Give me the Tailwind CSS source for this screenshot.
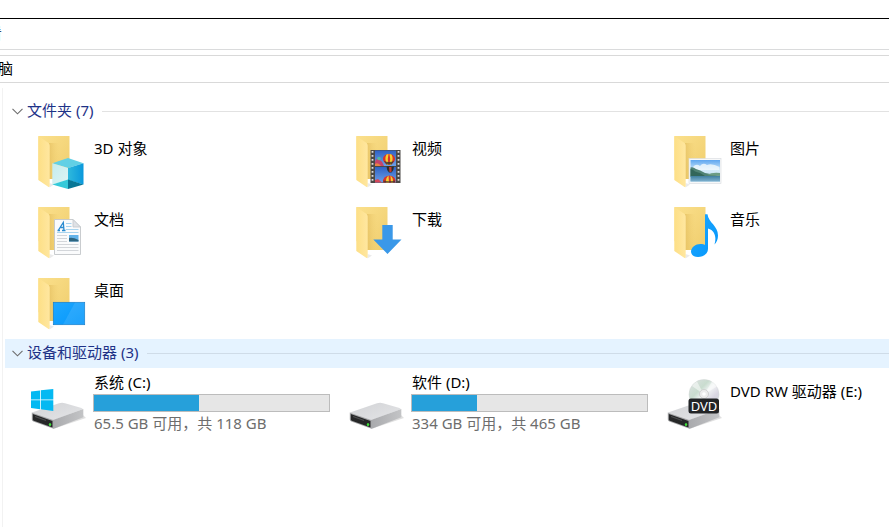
<!DOCTYPE html>
<html lang="zh-CN">
<head>
    <meta charset="UTF-8">
    <meta name="viewport" content="width=device-width, initial-scale=1.0">
    <title>此电脑</title>
    <script src="https://cdn.jsdelivr.net/npm/@tailwindcss/browser@4"></script>
</head>
<body class="min-h-screen flex flex-col overflow-x-hidden bg-white font-['Noto_Sans','Noto_Sans_CJK_SC',sans-serif] text-[15px] leading-5 text-black">
    <!-- Shared gradients and shapes -->
    <svg class="absolute size-0" aria-hidden="true">
        <defs>
            <linearGradient id="back" x1="0" y1="0" x2="1" y2="1">
                <stop offset="0" stop-color="#fbe08c"/><stop offset="1" stop-color="#efcd6d"/>
            </linearGradient>
            <linearGradient id="flap" x1="0" y1="0" x2="1" y2="0">
                <stop offset="0" stop-color="#fddf86"/><stop offset="1" stop-color="#ffe7a0"/>
            </linearGradient>
            <linearGradient id="fold" x1="0" y1="0" x2="1" y2="0">
                <stop offset="0" stop-color="#dfb858" stop-opacity=".6"/><stop offset="1" stop-color="#eecb69" stop-opacity="0"/>
            </linearGradient>
            <linearGradient id="blue" x1="0" y1="0" x2="1" y2="1">
                <stop offset="0" stop-color="#1fa8ff"/><stop offset="1" stop-color="#0496fb"/>
            </linearGradient>
            <linearGradient id="sky" x1="0" y1="0" x2="0" y2="1">
                <stop offset="0" stop-color="#5ea6f0"/><stop offset=".5" stop-color="#d5ecfa"/><stop offset="1" stop-color="#a6d2ea"/>
            </linearGradient>
            <linearGradient id="sea" x1="0" y1="0" x2="0" y2="1">
                <stop offset="0" stop-color="#3f7f9f"/><stop offset="1" stop-color="#7fb2d0"/>
            </linearGradient>
            <linearGradient id="film" x1="0" y1="0" x2="0" y2="1">
                <stop offset="0" stop-color="#2f62c4"/><stop offset="1" stop-color="#6c9fe6"/>
            </linearGradient>
            <linearGradient id="cubeLeft" x1="0" y1="0" x2="1" y2="1">
                <stop offset="0" stop-color="#c4ecef"/><stop offset="1" stop-color="#def4f3"/>
            </linearGradient>
            <linearGradient id="cubeRight" x1="0" y1="0" x2="1" y2="0">
                <stop offset="0" stop-color="#2fb9dc"/><stop offset="1" stop-color="#0a98dc"/>
            </linearGradient>
            <linearGradient id="metalTop" x1="0" y1="0" x2="1" y2="1">
                <stop offset="0" stop-color="#d2d3d6"/><stop offset="1" stop-color="#e4e5e7"/>
            </linearGradient>
            <linearGradient id="metalSide" x1="0" y1="0" x2="1" y2="0">
                <stop offset="0" stop-color="#a9aaad"/><stop offset="1" stop-color="#c3c4c6"/>
            </linearGradient>
            <linearGradient id="disc" x1="0" y1="0" x2="1" y2="1">
                <stop offset="0" stop-color="#dfe3e3"/><stop offset=".35" stop-color="#c9dccf"/><stop offset=".5" stop-color="#f1f4f4"/><stop offset=".7" stop-color="#d9d6e2"/><stop offset="1" stop-color="#cbd6d8"/>
            </linearGradient>
            <symbol id="folder" viewBox="0 0 64 64">
                <path d="M8.500 6H39.500V49H19L8.500 40Z" fill="url(#back)"/>
                <path d="M19 13H29V49H19Z" fill="url(#fold)"/>
                <path d="M19.500 57.500L24 54.500L19.500 53Z" fill="#dcdcdc" opacity=".6"/>
                <path d="M8.300 6L18.500 13Q19.700 14 19.700 15.500V55.500Q19.700 58 17.800 56.500L8.300 50Z" fill="url(#flap)"/>
            </symbol>
            <symbol id="drive" viewBox="0 0 64 64">
                <path d="M23 57L56 46L53 43Z" fill="#999" opacity=".3"/>
                <path d="M2 40.500L29 31.300Q32 30.300 35 31.200L51.500 36Q53.500 36.700 52 37.500L23.500 48Z" fill="url(#metalTop)"/>
                <path d="M23 48L53.300 37V45.300L24.500 56.500L23 56.800Z" fill="url(#metalSide)"/>
                <path d="M1.800 40.500L23.500 48V56.800L3.300 49.500Q1.800 49 1.800 47.500Z" fill="#a6a7a9"/>
                <path d="M2.800 42L22.500 49V55.500L3.800 48.800Q2.800 48.400 2.800 47.400Z" fill="#262728"/>
                <path d="M5 44.500L16 48.500" stroke="#4c4d4e" stroke-width="1.200"/>
                <ellipse cx="20" cy="52.500" rx="1.200" ry="1.500" fill="#3fe03a"/>
            </symbol>
            <symbol id="balloon" viewBox="0 0 12 14">
                <path d="M6 0C9.500 0 12 2.300 12 5C12 8 8.500 10 8 11H4C3.500 10 0 8 0 5C0 2.300 2.500 0 6 0Z" fill="#d8352a"/>
                <path d="M3.500 .6Q1 5 4 11H5.500Q4 5 5.500 0ZM8.500 .6Q11 5 8 11H6.500Q8 5 6.500 0Z" fill="#f6cf2f"/>
                <path d="M1 7Q6 9 11 7L8.500 10.500H3.500Z" fill="#33322f" opacity=".8"/>
                <path d="M4.500 12H7.500V14H4.500Z" fill="#4e3320"/>
            </symbol>
        </defs>
    </svg>

    <!-- Ribbon tabs -->
    <nav class="mt-[18px] h-8 flex items-center border-t border-b border-t-black border-b-[#dadbdc] overflow-hidden">
        <a href="#" class="-ml-7 pb-0.5 text-[#2b4a6b]">查看</a>
    </nav>

    <!-- Address bar -->
    <nav class="mt-[5px] h-7 flex items-center border-y border-[#d9d9d9] overflow-hidden">
        <a href="#" class="-ml-8 pb-0.5">此电脑</a>
    </nav>

    <!-- Content -->
    <main class="grow mt-[5px] ml-0.5 pl-0.5 pt-[9px] border-l border-[#f2f2f2]">
        <section>
            <h2>
                <button type="button" class="w-full h-[29px] pl-[7px] flex items-center text-left text-[#1e3287]">
                    <svg class="w-[11px] h-[7px] mr-1" viewBox="0 0 11 7" fill="none" stroke="#6d6d6d" stroke-width="1.100"><path d="M.5 .8L5.500 5.800L10.500 .8"/></svg>
                    <span class="pb-[3px]">文件夹 (7)</span>
                    <span class="grow ml-[9px] h-px bg-[#e2e2e2]"></span>
                </button>
            </h2>
            <ul class="pl-[25px] grid grid-cols-[318px_318px_1fr]">
                <li>
                    <a href="#" class="flex pt-1 pb-[3px]">
                        <svg class="size-16 shrink-0" viewBox="0 0 64 64">
                            <use href="#folder"/>
                            <path d="M38 28L53.500 33.300L38 38L22.300 33.300Z" fill="#62d0e5"/>
                            <path d="M22.300 33.300L38 38V50L22.300 54.500Z" fill="url(#cubeLeft)"/>
                            <path d="M38 38L53.500 33.300V54.500L38 50Z" fill="url(#cubeRight)"/>
                            <path d="M22.300 54.500L38 49.500V59Z" fill="#35c9d9"/>
                            <path d="M38 49.500L53.500 54.500L38 59Z" fill="#087796"/>
                        </svg>
                        <span class="mt-2">3D 对象</span>
                    </a>
                </li>
                <li>
                    <a href="#" class="flex pt-1 pb-[3px]">
                        <svg class="size-16 shrink-0" viewBox="0 0 64 64">
                            <use href="#folder"/>
                            <rect x="22.500" y="20" width="30" height="33" fill="#4a4846"/>
                            <path d="M24.500 21V53M50.500 21V53" stroke="#ddd" stroke-width="1.800" stroke-dasharray="1.800 2.200"/>
                            <rect x="27" y="20.500" width="21" height="15.500" fill="url(#film)"/>
                            <rect x="27" y="37" width="21" height="15.500" fill="url(#film)"/>
                            <path d="M27 32Q28 27 31 30Q34 30 36 36H27Z" fill="#c5456a"/>
                            <path d="M27 34Q30 32 33 36H27Z" fill="#e78246"/>
                            <path d="M27 52.500V50L30 49L34 52.500Z" fill="#d5485a"/>
                            <circle cx="31" cy="28.500" r="1.800" fill="#54b6a0"/>
                            <use href="#balloon" x="35" y="24" width="12" height="14"/>
                            <path d="M38.500 36.500H46Q46 40 43.500 42.500H41Q38.500 40 38.500 36.500Z" fill="#2c2f2c"/>
                            <path d="M41 37H43.500V42H41.500Z" fill="#c83a2c"/>
                            <path d="M35 52.500Q34.500 46 41.500 45.500Q48 46 47.500 52.500Z" fill="#d8352a"/>
                            <path d="M38 52.500Q37.500 48 40.500 45.500L41 52.500ZM43 52.500L42.500 45.500Q45.500 48 45 52.500Z" fill="#f6cf2f"/>
                            <path d="M35.500 50.500Q41 52 47 50.500V52.500H35.500Z" fill="#33322f" opacity=".7"/>
                        </svg>
                        <span class="mt-2">视频</span>
                    </a>
                </li>
                <li>
                    <a href="#" class="flex pt-1 pb-[3px]">
                        <svg class="size-16 shrink-0" viewBox="0 0 64 64">
                            <use href="#folder"/>
                            <rect x="23" y="28.500" width="32" height="25" fill="#f7f8f9" stroke="#d8dade" stroke-width=".6"/>
                            <rect x="24.500" y="30" width="29.500" height="21.500" fill="url(#sky)"/>
                            <path d="M27 37Q30 33 34 36Q37 32 41 35Q46 33 53.500 37V40H27Z" fill="#f4fafd" opacity=".8"/>
                            <path d="M24.500 37.500Q27 36.500 30 39Q34 40 39 43Q44 44 54 46V47H24.500Z" fill="#4f8274"/>
                            <path d="M24.500 39Q27 39 29 41.500Q35 42.500 39 46H24.500Z" fill="#32665a"/>
                            <path d="M41 45Q46 42 54 43V46Z" fill="#6b9c84"/>
                            <rect x="24.500" y="46" width="29.500" height="5.500" fill="url(#sea)"/>
                        </svg>
                        <span class="mt-2">图片</span>
                    </a>
                </li>
                <li>
                    <a href="#" class="flex pt-1 pb-[3px]">
                        <svg class="size-16 shrink-0" viewBox="0 0 64 64">
                            <use href="#folder"/>
                            <path d="M24.500 18.500H43L50.500 26V53.500H24.500Z" fill="#fafbfc" stroke="#c3c6ca" stroke-width=".9"/>
                            <path d="M43 18.500V26H50.500Z" fill="#dfe2e6" stroke="#c3c6ca" stroke-width=".8"/>
                            <path d="M36 22.500H41.500M36 25.500H41.500M36 28.500H48.500M27 31.500H48.500" stroke="#a8d4ef"/>
                            <path d="M27 34.500H37M27 37.500H37M27 40.500H37M27 43.500H48.500M27 46.500H48.500M27 49.500H48.500" stroke="#d3d6da"/>
                            <path d="M27.500 29.500H30M32 29.500H35.500M28.500 29L33.300 21.500L34 29.500M30.500 26.500H33.500" fill="none" stroke="#2a8bd0" stroke-width="1.300"/>
                            <rect x="39" y="34" width="9.500" height="6.500" fill="#62b3ea"/>
                            <path d="M39 37Q43 36 48.500 39V40.500H39Z" fill="#2d6580"/>
                        </svg>
                        <span class="mt-2">文档</span>
                    </a>
                </li>
                <li>
                    <a href="#" class="flex pt-1 pb-[3px]">
                        <svg class="size-16 shrink-0" viewBox="0 0 64 64">
                            <use href="#folder"/>
                            <path d="M34.300 24H44.700V38.500H53.500L39.500 53L25.300 38.500H34.300Z" fill="#3a98e8"/>
                        </svg>
                        <span class="mt-2">下载</span>
                    </a>
                </li>
                <li>
                    <a href="#" class="flex pt-1 pb-[3px]">
                        <svg class="size-16 shrink-0" viewBox="0 0 64 64">
                            <use href="#folder"/>
                            <path d="M39 13.300H41.500C42.500 22 52 24.500 52 34.500C52 38.500 50.500 41.500 48.500 43.500C50.500 37 49.500 29.500 42 27.500V48C42 53 37 56 32 56C27.500 56 25 53.500 25 50.500C25 46.500 29.500 43 34.500 43C36.500 43 38 43.300 39 44Z" fill="url(#blue)"/>
                        </svg>
                        <span class="mt-2">音乐</span>
                    </a>
                </li>
                <li>
                    <a href="#" class="flex pt-1 pb-[3px]">
                        <svg class="size-16 shrink-0" viewBox="0 0 64 64">
                            <use href="#folder"/>
                            <rect x="23.300" y="30.300" width="31.400" height="22.400" fill="url(#blue)" stroke="#1a7fc9" stroke-width=".7"/>
                            <path d="M45 30.500H54.500V52.500H33Z" fill="#fff" opacity=".1"/>
                        </svg>
                        <span class="mt-2">桌面</span>
                    </a>
                </li>
            </ul>
        </section>

        <section>
            <h2>
                <button type="button" class="w-full h-[29px] pl-[7px] flex items-center text-left text-[#1e3287] bg-[#e5f3ff]">
                    <svg class="w-[11px] h-[7px] mr-1" viewBox="0 0 11 7" fill="none" stroke="#6d6d6d" stroke-width="1.100"><path d="M.5 .8L5.500 5.800L10.500 .8"/></svg>
                    <span class="pb-[3px]">设备和驱动器 (3)</span>
                    <span class="grow ml-[9px] h-px bg-[#cfdce8]"></span>
                </button>
            </h2>
            <ul class="pl-[25px] grid grid-cols-[318px_318px_1fr]">
                <li>
                    <a href="#" class="flex pt-1">
                        <svg class="size-16 shrink-0" viewBox="0 0 64 64">
                            <use href="#drive"/>
                            <path d="M1 19.500L10 18.500V27.500H1ZM10.800 18.300L23.300 17V27.500H10.800ZM1 28.300H10V37.200L1 36ZM10.800 28.300H23.300V39L10.800 37.300Z" fill="#04b9f2"/>
                        </svg>
                        <span class="w-[237px] -ml-px">
                            <span class="block pl-px">系统 (C:)</span>
                            <span class="block mt-0.5 h-[18px] border border-[#bcbcbc] bg-[#e6e6e6]" role="meter" aria-label="系统 (C:)" aria-valuenow="44.6">
                                <span class="block h-full bg-[#26a0da]" style="width: 44.6%"></span>
                            </span>
                            <span class="block mt-px pl-px text-[#6d6d6d]">65.5 GB 可用，共 118 GB</span>
                        </span>
                    </a>
                </li>
                <li>
                    <a href="#" class="flex pt-1">
                        <svg class="size-16 shrink-0" viewBox="0 0 64 64"><use href="#drive"/></svg>
                        <span class="w-[237px] -ml-px">
                            <span class="block pl-px">软件 (D:)</span>
                            <span class="block mt-0.5 h-[18px] border border-[#bcbcbc] bg-[#e6e6e6]" role="meter" aria-label="软件 (D:)" aria-valuenow="27.7">
                                <span class="block h-full bg-[#26a0da]" style="width: 27.7%"></span>
                            </span>
                            <span class="block mt-px pl-px text-[#6d6d6d]">334 GB 可用，共 465 GB</span>
                        </span>
                    </a>
                </li>
                <li>
                    <a href="#" class="flex pt-1">
                        <svg class="size-16 shrink-0" viewBox="0 0 64 64">
                            <use href="#drive"/>
                            <circle cx="38" cy="22.500" r="15" fill="url(#disc)" stroke="#d0d4d4" stroke-width=".5"/>
                            <path d="M38 22.500L26 14Q28 11 31 9.500ZM38 22.500L46 9.500Q49 11.500 51 14.500Z" fill="#fff" opacity=".5"/>
                            <circle cx="38" cy="22" r="4.500" fill="#ececec" stroke="#c6c6c6" stroke-width=".7"/>
                            <circle cx="38" cy="22" r="1.800" fill="#fff"/>
                            <rect x="22.500" y="26.500" width="30.500" height="15" rx="2.500" fill="#222426"/>
                            <text x="38" y="38.500" text-anchor="middle" font-size="13" fill="#fff">DVD</text>
                        </svg>
                        <span class="mt-[9px]">DVD RW 驱动器 (E:)</span>
                    </a>
                </li>
            </ul>
        </section>
    </main>
</body>
</html>
